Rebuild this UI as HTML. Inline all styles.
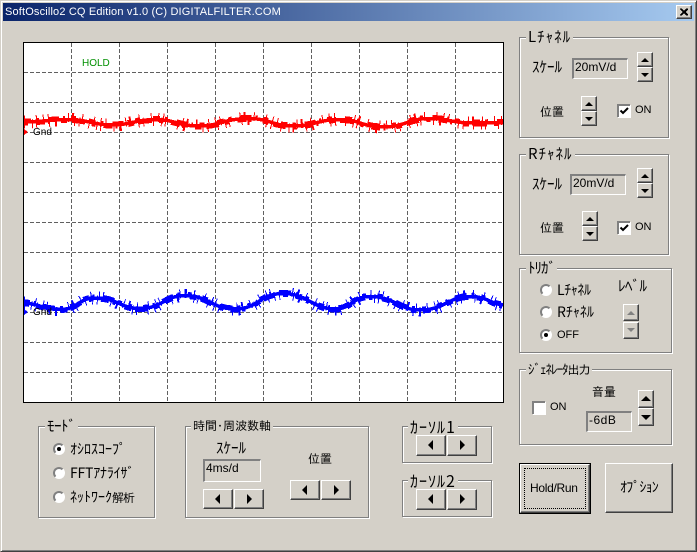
<!DOCTYPE html>
<html lang="ja"><head><meta charset="utf-8"><title>SoftOscillo2</title>
<style>
html,body{margin:0;padding:0;background:#d4d0c8}
#w{position:relative;width:697px;height:552px;overflow:hidden;background:#d4d0c8;font:12px/14px "IPAGothic","Noto Sans CJK JP",sans-serif;color:#000}
#w div,#w span{position:absolute;box-sizing:border-box}
.t{white-space:nowrap}
.l{background:#d4d0c8;padding:0 2px}
.g{border:1px solid #808080;box-shadow:1px 1px 0 #fff,inset 1px 1px 0 #fff}
.b{background:#d4d0c8;border-top:1px solid #fff;border-left:1px solid #fff;border-right:1px solid #404040;border-bottom:1px solid #404040;box-shadow:inset -1px -1px 0 #808080}
.e{background:#d4d0c8;border-top:2px solid #808080;border-left:2px solid #808080;border-right:1px solid #fff;border-bottom:1px solid #fff;padding-left:1px;white-space:nowrap;font:12px/14px "Liberation Sans",sans-serif}
.c{width:13px;height:13px;background:#fff;border-top:2px solid #808080;border-left:2px solid #808080;box-shadow:1px 1px 0 #fff}
.r{width:12px;height:12px;border-radius:50%;background:#fff;border:2px solid #808080;border-right-color:#fff;border-bottom-color:#fff}
.r i{position:absolute;left:2px;top:2px;width:4px;height:4px;background:#000;border-radius:50%}
svg{position:absolute;display:block}
.a{position:absolute;width:0;height:0;display:block}
.u{border-left:4px solid transparent;border-right:4px solid transparent;border-bottom:4px solid #000;left:3px;top:5px}
.d{border-left:4px solid transparent;border-right:4px solid transparent;border-top:4px solid #000;left:3px;top:5px}
.lf{border-top:5px solid transparent;border-bottom:5px solid transparent;border-right:5px solid #000;left:11px;top:4px}
.rt{border-top:5px solid transparent;border-bottom:5px solid transparent;border-left:5px solid #000;left:12px;top:4px}
.k15,.k14,.k13,.k16{font-family:"Noto Sans CJK JP","IPAGothic",sans-serif}
.k13{font-size:13px}
.k15{font-size:15px}
.k14{font-size:14px}
.k16{font-size:16px}
.on{font:11px/14px "Liberation Sans",sans-serif}
b{font-weight:normal;font-size:12px;letter-spacing:-1px;font-family:"IPAGothic",sans-serif}
</style></head><body>
<div id="w">
<div style="left:0;top:0;width:697px;height:552px;border-top:1px solid #d4d0c8;border-left:1px solid #d4d0c8;border-right:1px solid #404040;border-bottom:1px solid #404040;box-shadow:inset 1px 1px 0 #fff,inset -1px -1px 0 #808080"></div>
<div style="left:3px;top:3px;width:691px;height:18px;background:linear-gradient(90deg,#0a246a,#a6caf0)"></div>
<div class="t" style="left:5px;top:4px;color:#fff;font:11px/16px 'Liberation Sans',sans-serif;letter-spacing:.16px">SoftOscillo2 CQ Edition v1.0 (C) DIGITALFILTER.COM</div>
<div class="b" style="left:676px;top:5px;width:16px;height:14px"><svg width="14" height="12" style="left:0;top:0"><path d="M3 2.500h2l2 2.500 2-2.500h2v1L8.500 6 11 8.500v1H9L7 7 5 9.500H3v-1L5.500 6 3 3.500z" fill="#000" shape-rendering="crispEdges"/></svg></div>

<svg width="697" height="552" style="left:0;top:0" shape-rendering="crispEdges">
<rect x="23.500" y="42.500" width="480" height="360" fill="#fff" stroke="#000"/>
<path fill="none" stroke="#606060" stroke-dasharray="4 2" d="M71.500 43V402M119.500 43V402M167.500 43V402M215.500 43V402M263.500 43V402M311.500 43V402M359.500 43V402M407.500 43V402M455.500 43V402M24 72.500H503M24 102.500H503M24 132.500H503M24 162.500H503M24 192.500H503M24 222.500H503M24 252.500H503M24 282.500H503M24 312.500H503M24 342.500H503M24 372.500H503"/>
<defs>
<path id="rp" fill="none" d="M24 122C40 122 50 119.500 70 119.500C88 119.500 92 125 112 125C132 125 135 119.500 155 119.500C175 119.500 178 126 198 126C220 126 225 118.500 248 118.500C270 118.500 272 126 293 126C315 126 318 119.500 340 119.500C360 119.500 362 127 383 127C405 127 408 118.500 430 118.500C450 118.500 452 123 470 123C485 123 490 122.500 503 122.500"/>
<path id="bp" fill="none" d="M24 303C38 303 42 309.500 60 309.500C78 309.500 78 298 95 298C118 298 120 308.500 140 308.500C162 308.500 165 295.500 185 295.500C208 295.500 212 309 235 309C258 309 260 293.500 283 293.500C308 293.500 312 309 335 309C352 309 352 296.500 370 296.500C395 296.500 398 310 420 310C445 310 448 296.500 470 296.500C488 296.500 490 304 503 305"/>
</defs>
<use href="#rp" stroke="#f00" stroke-width="3.500"/>
<use href="#rp" stroke="#f00" stroke-width="3" stroke-dasharray="7 5 3 9 11 4 2 6 5 13" transform="translate(0,-2)"/>
<use href="#rp" stroke="#f00" stroke-width="3" stroke-dasharray="4 8 9 3 2 11 6 5 13 7" transform="translate(0,2)"/>
<use href="#rp" stroke="#f00" stroke-width="9" stroke-dasharray="1 7 1 3 1 12 1 5 2 17 1 4 1 9" transform="translate(0,2)"/>
<use href="#rp" stroke="#f00" stroke-width="9" stroke-dasharray="1 11 1 6 1 4 1 19 1 3 2 8" transform="translate(0,-2)"/>
<use href="#bp" stroke="#00f" stroke-width="3.500"/>
<use href="#bp" stroke="#00f" stroke-width="3" stroke-dasharray="6 4 2 8 12 5 3 7 4 11" transform="translate(0,-2)"/>
<use href="#bp" stroke="#00f" stroke-width="3" stroke-dasharray="5 7 8 4 3 10 7 4 12 8" transform="translate(0,2)"/>
<use href="#bp" stroke="#00f" stroke-width="9" stroke-dasharray="1 6 1 4 1 13 1 5 2 15 1 3 1 10" transform="translate(0,2)"/>
<use href="#bp" stroke="#00f" stroke-width="9" stroke-dasharray="1 10 1 7 1 3 1 21 1 4 2 7" transform="translate(0,-2)"/>
<path d="M24 129l4 3-4 3z" fill="#f00"/>
<path d="M24 309l4 3-4 3z" fill="#00f"/>
</svg>
<div class="t" style="left:82px;top:57px;color:#009000;font:10px/14px 'Liberation Sans',sans-serif">HOLD</div>
<div class="t" style="left:33px;top:126px;font:10px/14px 'Liberation Sans',sans-serif">Gnd</div>
<div class="t" style="left:33px;top:306px;font:10px/14px 'Liberation Sans',sans-serif">Gnd</div>

<!-- L channel -->
<div class="g" style="left:519px;top:37px;width:150px;height:101px"></div>
<div class="t l k15" style="left:526px;top:30px;letter-spacing:1px">Lﾁｬﾈﾙ</div>
<div class="t k15" style="left:532px;top:60px">ｽｹｰﾙ</div>
<div class="e" style="left:572px;top:58px;width:56px;height:21px">20mV/d</div>
<div class="b" style="left:637px;top:52px;width:16px;height:15px"><i class="a u"></i></div>
<div class="b" style="left:637px;top:67px;width:16px;height:15px"><i class="a d"></i></div>
<div class="t" style="left:540px;top:105px">位置</div>
<div class="b" style="left:581px;top:96px;width:16px;height:15px"><i class="a u"></i></div>
<div class="b" style="left:581px;top:111px;width:16px;height:15px"><i class="a d"></i></div>
<div class="c" style="left:617px;top:104px"><svg width="11" height="11" style="left:0;top:0"><path d="M1.500 4.500l2.500 2.500 5-5" fill="none" stroke="#000" stroke-width="2"/></svg></div>
<div class="t on" style="left:635px;top:103px">ON</div>

<!-- R channel -->
<div class="g" style="left:519px;top:154px;width:150px;height:101px"></div>
<div class="t l k15" style="left:526px;top:147px;letter-spacing:1px">Rﾁｬﾈﾙ</div>
<div class="t k15" style="left:532px;top:177px">ｽｹｰﾙ</div>
<div class="e" style="left:570px;top:174px;width:56px;height:21px">20mV/d</div>
<div class="b" style="left:637px;top:168px;width:16px;height:15px"><i class="a u"></i></div>
<div class="b" style="left:637px;top:183px;width:16px;height:15px"><i class="a d"></i></div>
<div class="t" style="left:540px;top:221px">位置</div>
<div class="b" style="left:582px;top:211px;width:16px;height:15px"><i class="a u"></i></div>
<div class="b" style="left:582px;top:226px;width:16px;height:15px"><i class="a d"></i></div>
<div class="c" style="left:617px;top:221px"><svg width="11" height="11" style="left:0;top:0"><path d="M1.500 4.500l2.500 2.500 5-5" fill="none" stroke="#000" stroke-width="2"/></svg></div>
<div class="t on" style="left:635px;top:220px">ON</div>

<!-- Trigger -->
<div class="g" style="left:519px;top:268px;width:153px;height:85px"></div>
<div class="t l k15" style="left:526px;top:261px;letter-spacing:-1px">ﾄﾘｶﾞ</div>
<div class="r" style="left:540px;top:284px"></div>
<div class="t k14" style="left:557px;top:283px;letter-spacing:-.4px">Lﾁｬﾈﾙ</div>
<div class="r" style="left:540px;top:306px"></div>
<div class="t k14" style="left:557px;top:305px">Rﾁｬﾈﾙ</div>
<div class="r" style="left:540px;top:329px"><i></i></div>
<div class="t on" style="left:557px;top:328px">OFF</div>
<div class="t k15" style="left:618px;top:279px;letter-spacing:-.5px">ﾚﾍﾞﾙ</div>
<div class="b" style="left:623px;top:304px;width:16px;height:17px"><i class="a u" style="border-bottom-color:#808080;top:6px"></i></div>
<div class="b" style="left:623px;top:322px;width:16px;height:17px"><i class="a d" style="border-top-color:#808080"></i></div>

<!-- Generator -->
<div class="g" style="left:519px;top:369px;width:153px;height:76px"></div>
<div class="t l k13" style="left:526px;top:362px;letter-spacing:-1px">ｼﾞｪﾈﾚｰﾀ<b style="letter-spacing:-1px">出力</b></div>
<div class="c" style="left:532px;top:401px"></div>
<div class="t on" style="left:550px;top:400px">ON</div>
<div class="t" style="left:592px;top:385px">音量</div>
<div class="e" style="left:586px;top:411px;width:46px;height:21px;letter-spacing:.5px">-6dB</div>
<div class="b" style="left:638px;top:390px;width:16px;height:18px"><i class="a u" style="top:5px;left:2px;border-left-width:5px;border-right-width:5px;border-bottom-width:5px"></i></div>
<div class="b" style="left:638px;top:408px;width:16px;height:18px"><i class="a d" style="top:6px;left:2px;border-left-width:5px;border-right-width:5px;border-top-width:5px"></i></div>

<!-- Buttons -->
<div style="left:519px;top:463px;width:72px;height:51px;border:1px solid #000"><div class="b" style="left:0;top:0;width:70px;height:49px"></div><div style="left:4px;top:4px;width:62px;height:41px;border:1px dotted #000"></div></div>
<div class="t" style="left:530px;top:481px;font:12px/14px 'Liberation Sans',sans-serif;letter-spacing:-.3px">Hold/Run</div>
<div class="b" style="left:605px;top:463px;width:68px;height:50px"></div>
<div class="t k14" style="left:620px;top:480px;letter-spacing:-.8px">ｵﾌﾟｼｮﾝ</div>

<!-- Mode -->
<div class="g" style="left:38px;top:426px;width:117px;height:92px"></div>
<div class="t l k15" style="left:45px;top:419px;letter-spacing:-.5px">ﾓｰﾄﾞ</div>
<div class="r" style="left:53px;top:443px"><i></i></div>
<div class="t k14" style="left:70px;top:442px">ｵｼﾛｽｺｰﾌﾟ</div>
<div class="r" style="left:53px;top:467px"></div>
<div class="t k14" style="left:70px;top:466px;letter-spacing:-.2px">FFTｱﾅﾗｲｻﾞ</div>
<div class="r" style="left:53px;top:491px"></div>
<div class="t k14" style="left:70px;top:490px">ﾈｯﾄﾜｰｸ<b>解析</b></div>

<!-- Time -->
<div class="g" style="left:185px;top:426px;width:184px;height:92px"></div>
<div class="t l" style="left:191px;top:419px">時間･周波数軸</div>
<div class="t k15" style="left:216px;top:441px">ｽｹｰﾙ</div>
<div class="e" style="left:203px;top:459px;width:58px;height:23px">4ms/d</div>
<div class="b" style="left:203px;top:489px;width:30px;height:20px"><i class="a lf"></i></div>
<div class="b" style="left:234px;top:489px;width:30px;height:20px"><i class="a rt"></i></div>
<div class="t" style="left:308px;top:452px">位置</div>
<div class="b" style="left:290px;top:480px;width:30px;height:20px"><i class="a lf"></i></div>
<div class="b" style="left:321px;top:480px;width:30px;height:20px"><i class="a rt"></i></div>

<!-- Cursor 1 -->
<div class="g" style="left:402px;top:426px;width:90px;height:37px"></div>
<div class="t l k16" style="left:408px;top:419px;letter-spacing:1px">ｶｰｿﾙ1</div>
<div class="b" style="left:416px;top:435px;width:30px;height:21px"><i class="a lf"></i></div>
<div class="b" style="left:447px;top:435px;width:30px;height:21px"><i class="a rt"></i></div>

<!-- Cursor 2 -->
<div class="g" style="left:402px;top:480px;width:90px;height:37px"></div>
<div class="t l k16" style="left:408px;top:473px;letter-spacing:1px">ｶｰｿﾙ2</div>
<div class="b" style="left:416px;top:489px;width:30px;height:21px"><i class="a lf"></i></div>
<div class="b" style="left:447px;top:489px;width:30px;height:21px"><i class="a rt"></i></div>
</div>
</body></html>
